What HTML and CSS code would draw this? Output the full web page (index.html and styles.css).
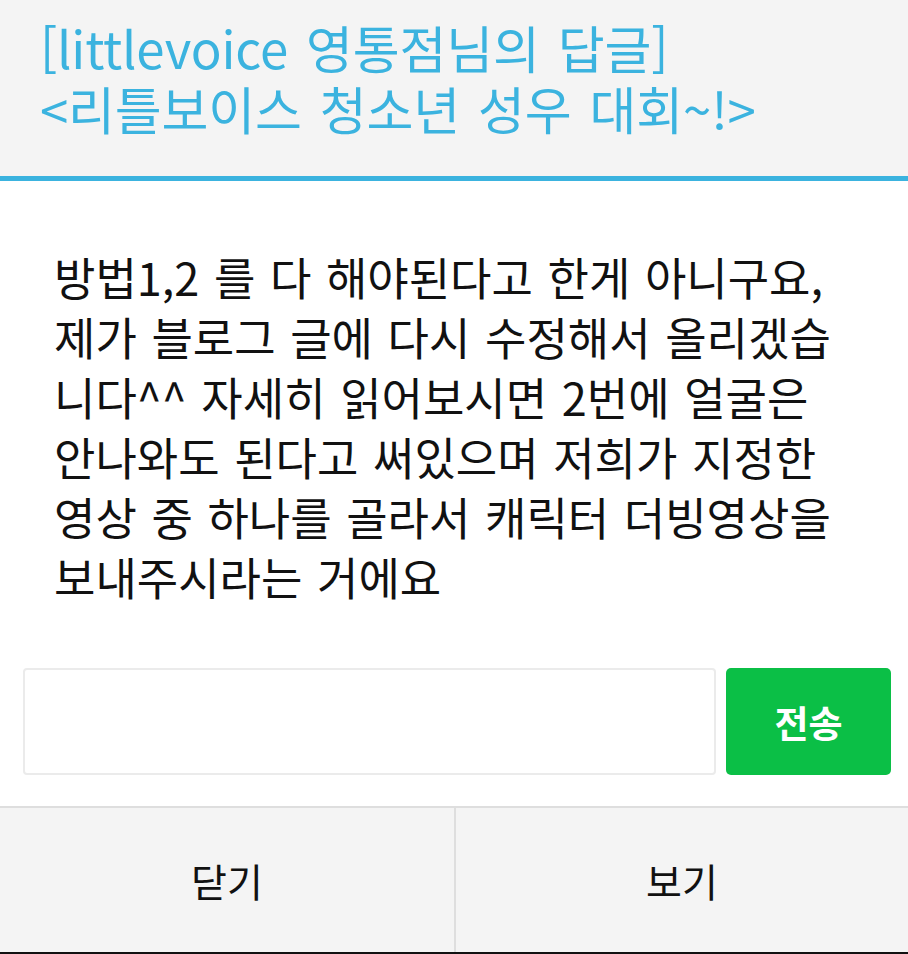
FILE: index.html
```html
<!DOCTYPE html>
<html lang="ko">
<head>
<meta charset="utf-8">
<link rel="stylesheet" href="styles.css">
</head>
<body>
<div class="dialog">
  <header class="head">
    <h1 class="title">[littlevoice 영통점님의 답글]<br>&lt;리틀보이스 청소년 성우 대회~!&gt;</h1>
  </header>
  <main class="body">
    <p class="msg">방법1,2 를 다 해야된다고 한게 아니구요,<br>제가 블로그 글에 다시 수정해서 올리겠습<br>니다^^ 자세히 읽어보시면 2번에 얼굴은<br>안나와도 된다고 써있으며 저희가 지정한<br>영상 중 하나를 골라서 캐릭터 더빙영상을<br>보내주시라는 거에요</p>
    <div class="reply">
      <input class="field" type="text">
      <button class="send">전송</button>
    </div>
  </main>
  <footer class="actions">
    <button class="act act-left">닫기</button>
    <button class="act">보기</button>
  </footer>
</div>
</body>
</html>
```
FILE: styles.css
```css
html, body {
  margin: 0;
  padding: 0;
  background: #fff;
}
body {
  font-family: "Noto Sans CJK KR", "Noto Sans", sans-serif;
  width: 908px;
  height: 954px;
  overflow: hidden;
}
.dialog {
  display: flex;
  flex-direction: column;
  height: 954px;
}
.head {
  background: #f4f4f4;
  height: 176px;
  border-bottom: 5px solid #3bb3df;
  box-sizing: content-box;
  padding: 0 40px;
  display: flex;
  align-items: flex-start;
}
.title {
  margin: 17px 0 0;
  font-weight: 400;
  font-size: 51px;
  line-height: 61px;
  color: #3bb3df;
  letter-spacing: -0.2px;
  word-spacing: 4px;
}
.body {
  flex: 1;
  padding: 0 17px 0 23px;
  display: flex;
  flex-direction: column;
}
.msg {
  margin: 66px 0 0 31px;
  font-size: 45px;
  line-height: 60px;
  color: #111;
  letter-spacing: 0;
  word-spacing: 2px;
  white-space: nowrap;
}
.reply {
  display: flex;
  gap: 10px;
  margin-top: 61px;
  height: 107px;
}
.field {
  flex: 1;
  margin: 0;
  border: 2px solid #ebebeb;
  border-radius: 4px;
  background: #fff;
  box-sizing: border-box;
}
.send {
  width: 165px;
  border: none;
  border-radius: 5px;
  background: #0bbf46;
  color: #fff;
  font-family: inherit;
  font-size: 37px;
  font-weight: 700;
  padding: 0;
}
.actions {
  display: flex;
  height: 148px;
  border-top: 2px solid #dedede;
  border-bottom: 2px solid #111;
  background: #f4f4f4;
  box-sizing: border-box;
}
.act {
  flex: 1;
  border: none;
  background: #f4f4f4;
  font-family: inherit;
  font-size: 39px;
  color: #111;
  padding: 0;
  margin: 0;
}
.act-left {
  flex: 0 0 456px;
  border-right: 2px solid #dedede;
}
```
